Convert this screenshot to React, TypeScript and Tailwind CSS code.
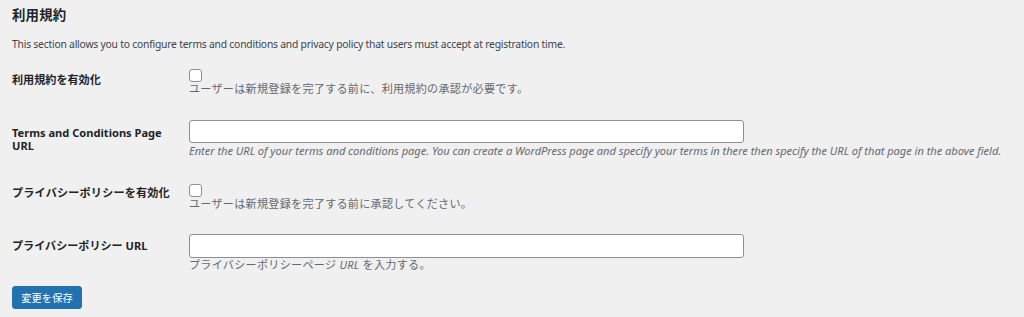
import React from "react";

const font = {
  fontFamily: '"Noto Sans", "Noto Sans CJK JP", sans-serif',
};

function Checkbox() {
  return (
    <span className="block h-[12.6px] w-[12.6px] rounded-[3px] border border-[#8c8f94] bg-white" />
  );
}

function TextInput() {
  return (
    <input
      type="text"
      className="block h-[23.5px] w-[555px] rounded-[3px] border border-[#8c8f94] bg-white px-2 text-[11px] outline-none"
    />
  );
}

export default function App() {
  return (
    <div
      className="min-h-screen bg-[#f0f0f1] pl-3 pt-[5px] text-[#1d2327]"
      style={font}
    >
      <h2 className="text-[13.4px] font-bold leading-[20px] tracking-[0.2px]">
        利用規約
      </h2>
      <p className="mt-[11.5px] text-[10.3px] leading-[14px] tracking-[-0.2px] text-[#3c434a]">
        This section allows you to configure terms and conditions and privacy
        policy that users must accept at registration time.
      </p>

      {/* 利用規約を有効化 */}
      <div className="mt-[18.5px] flex">
        <div className="w-[177px] pt-[3.5px] text-[11.1px] font-bold leading-[14px]">
          利用規約を有効化
        </div>
        <div>
          <Checkbox />
          <p className="text-[11.1px] leading-[14px] tracking-[0.27px] text-[#646970]">
            ユーザーは新規登録を完了する前に、利用規約の承認が必要です。
          </p>
        </div>
      </div>

      {/* Terms URL */}
      <div className="mt-[24px] flex">
        <div className="w-[177px] pr-4 pt-[6px] text-[11.1px] font-bold leading-[13px]">
          Terms and Conditions Page
          <br />
          URL
        </div>
        <div>
          <TextInput />
          <p className="mt-[1px] whitespace-nowrap text-[11.1px] italic leading-[14px] tracking-[-0.03px] text-[#646970]">
            Enter the URL of your terms and conditions page. You can create a
            WordPress page and specify your terms in there then specify the URL
            of that page in the above field.
          </p>
        </div>
      </div>

      {/* プライバシーポリシーを有効化 */}
      <div className="mt-[26px] flex">
        <div className="w-[177px] pt-[2px] text-[11.1px] font-bold leading-[14px] tracking-[0.2px]">
          プライバシーポリシーを有効化
        </div>
        <div>
          <Checkbox />
          <p className="text-[11.1px] leading-[14px] tracking-[0.27px] text-[#646970]">
            ユーザーは新規登録を完了する前に承認してください。
          </p>
        </div>
      </div>

      {/* Privacy URL */}
      <div className="mt-[23.5px] flex">
        <div className="w-[177px] pt-[4.7px] text-[11.1px] font-bold leading-[14px]">
          プライバシーポリシー URL
        </div>
        <div>
          <TextInput />
          <p className="mt-[0.5px] text-[11.1px] leading-[14px] tracking-[0.27px] text-[#646970]">
            プライバシーポリシーページ <i>URL</i> を入力する。
          </p>
        </div>
      </div>

      <button
        type="button"
        className="mt-[14px] h-[23.3px] w-[70px] rounded-[3px] border border-[#2271b1] bg-[#2271b1] text-[10.3px] leading-none text-white"
      >
        変更を保存
      </button>
    </div>
  );
}
